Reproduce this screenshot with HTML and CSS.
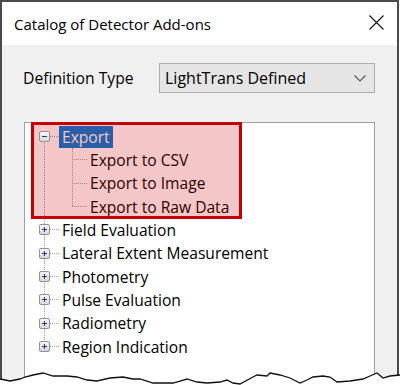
FILE: index.html
```html
<!DOCTYPE html>
<html lang="en">
<head>
    <meta charset="UTF-8">
    <meta name="viewport" content="width=device-width, initial-scale=1.0">
    <title>Catalog of Detector Add-ons</title>
    <link rel="stylesheet" href="styles.css">
</head>
<body>
    <div class="window">
        <div class="titlebar">
            <span class="title">Catalog of Detector Add-ons</span>
            <button class="close-btn" aria-label="Close">
                <svg width="15" height="15" viewBox="0 0 15 15">
                    <path d="M0.5 0.5 L14.5 14.5 M14.5 0.5 L0.5 14.5" stroke="#111" stroke-width="1.1" fill="none"/>
                </svg>
            </button>
        </div>

        <div class="content">
            <div class="field-row">
                <label class="field-label">Definition Type</label>
                <div class="dropdown">
                    <span>LightTrans Defined</span>
                    <svg width="12" height="7" viewBox="0 0 12 7">
                        <path d="M0.5 0.5 L6 6 L11.5 0.5" stroke="#555" stroke-width="1.1" fill="none"/>
                    </svg>
                </div>
            </div>

            <!-- Add-on tree -->
            <div class="tree-box">
                <ul class="tree">
                    <li>
                        <div class="row"><span class="toggle"></span><span class="dash"></span><span class="label selected">Export</span></div>
                        <ul class="children">
                            <li><div class="row"><span class="dash long"></span><span class="label">Export to CSV</span></div></li>
                            <li><div class="row"><span class="dash long"></span><span class="label">Export to Image</span></div></li>
                            <li><div class="row"><span class="dash long"></span><span class="label">Export to Raw Data</span></div></li>
                        </ul>
                    </li>
                    <li><div class="row"><span class="toggle plus"></span><span class="dash"></span><span class="label">Field Evaluation</span></div></li>
                    <li><div class="row"><span class="toggle plus"></span><span class="dash"></span><span class="label">Lateral Extent Measurement</span></div></li>
                    <li><div class="row"><span class="toggle plus"></span><span class="dash"></span><span class="label">Photometry</span></div></li>
                    <li><div class="row"><span class="toggle plus"></span><span class="dash"></span><span class="label">Pulse Evaluation</span></div></li>
                    <li><div class="row"><span class="toggle plus"></span><span class="dash"></span><span class="label">Radiometry</span></div></li>
                    <li><div class="row"><span class="toggle plus"></span><span class="dash"></span><span class="label">Region Indication</span></div></li>
                </ul>
                <div class="highlight"></div>
            </div>
        </div>
    </div>

    <!-- torn bottom edge of the screenshot -->
    <svg class="torn-edge" width="400" height="20" viewBox="0 0 400 20">
        <polygon fill="#fff" points="0,14 10,16 20,14 25,12 33,10 43,8 53,11 67,11 77,12 87,15 97,16 110,13 123,12 133,14 140,14 153,18 173,18 180,16 187,14 197,17 207,18 220,17 227,15 233,18 240,19 253,12 257,10 267,11 270,8 280,10 290,13 300,18 307,15 313,12 323,11 330,12 337,17 350,16 363,14 370,11 377,8 383,13 390,11 400,10 400,20 0,20"/>
        <polyline fill="none" stroke="#111" stroke-width="1.3" points="0,14 10,16 20,14 25,12 33,10 43,8 53,11 67,11 77,12 87,15 97,16 110,13 123,12 133,14 140,14 153,18 173,18 180,16 187,14 197,17 207,18 220,17 227,15 233,18 240,19 253,12 257,10 267,11 270,8 280,10 290,13 300,18 307,15 313,12 323,11 330,12 337,17 350,16 363,14 370,11 377,8 383,13 390,11 400,10"/>
    </svg>
</body>
</html>
```

FILE: styles.css
```css
body {
    margin: 0;
    padding: 0;
    height: 385px;
    overflow: hidden;
    position: relative;
    background: #fff;
    font-family: "Open Sans", Arial, sans-serif;
    color: #000;
}

.window {
    box-sizing: border-box;
    width: 399px;
    height: 385px;
    border: 2px solid #4a4a4a;
    border-bottom: none;
    display: flex;
    flex-direction: column;
    background: #f0f0f0;
}

.titlebar {
    height: 43px;
    flex-shrink: 0;
    background: #fff;
    display: flex;
    align-items: center;
    justify-content: space-between;
    padding: 0 13px 0 12px;
}

.title {
    font-size: 15px;
}

.close-btn {
    background: none;
    border: none;
    padding: 0;
    width: 15px;
    height: 15px;
    margin-top: -2px;
    cursor: pointer;
}

.close-btn svg {
    display: block;
}

.content {
    flex: 1;
    display: flex;
    flex-direction: column;
    padding: 18px 22px 0 22px;
}

.field-row {
    display: flex;
    align-items: center;
    height: 30px;
}

.field-label {
    width: 136px;
    margin-left: -1px;
    font-size: 15.7px;
}

.dropdown {
    flex: 1;
    box-sizing: border-box;
    height: 30px;
    border: 1px solid #adadad;
    background: #e5e5e5;
    display: flex;
    align-items: center;
    justify-content: space-between;
    padding: 0 8px 0 5px;
    font-size: 16px;
}

.dropdown svg {
    display: block;
}

/* Tree */
.tree-box {
    flex: 1;
    margin-top: 29px;
    position: relative;
    background: #fff;
    border: 1px solid #a0a0a0;
    border-bottom: none;
    padding-top: 2px;
}

.tree,
.children {
    list-style: none;
    margin: 0;
    padding: 0;
    position: relative;
}

.tree {
    padding-left: 14px;
    font-size: 15.6px;
}

.tree::before {
    content: "";
    position: absolute;
    left: 19px;
    top: 12px;
    bottom: 12px;
    border-left: 1px dotted #a0a0a0;
}

.children {
    margin-left: 33px;
}

.children::before {
    content: "";
    position: absolute;
    left: 0;
    top: 0;
    bottom: 12px;
    border-left: 1px dotted #a0a0a0;
}

.row {
    height: 23.33px;
    display: flex;
    align-items: center;
}

.toggle {
    box-sizing: border-box;
    width: 11px;
    height: 11px;
    border: 1px solid #919191;
    border-radius: 2px;
    background: linear-gradient(#f7f7f7, #d8d8d8);
    position: relative;
    z-index: 1;
    flex-shrink: 0;
}

.toggle::before {
    content: "";
    position: absolute;
    left: 2px;
    top: 4px;
    width: 5px;
    height: 1px;
    background: #1f3b86;
}

.toggle.plus::after {
    content: "";
    position: absolute;
    left: 4px;
    top: 2px;
    width: 1px;
    height: 5px;
    background: #1f3b86;
}

.dash {
    width: 9px;
    border-top: 1px dotted #a0a0a0;
    flex-shrink: 0;
}

.dash.long {
    width: 15px;
}

.label {
    padding: 0 3px;
    line-height: 22px;
    white-space: nowrap;
}

.label.selected {
    background: #0078d7;
    color: #fff;
}

.highlight {
    position: absolute;
    left: 6px;
    top: -1px;
    width: 211px;
    height: 97px;
    box-sizing: border-box;
    border: 3px solid #c40000;
    background: rgba(200, 0, 0, 0.22);
}

.torn-edge {
    position: absolute;
    left: 0;
    bottom: 0;
    display: block;
}
```
